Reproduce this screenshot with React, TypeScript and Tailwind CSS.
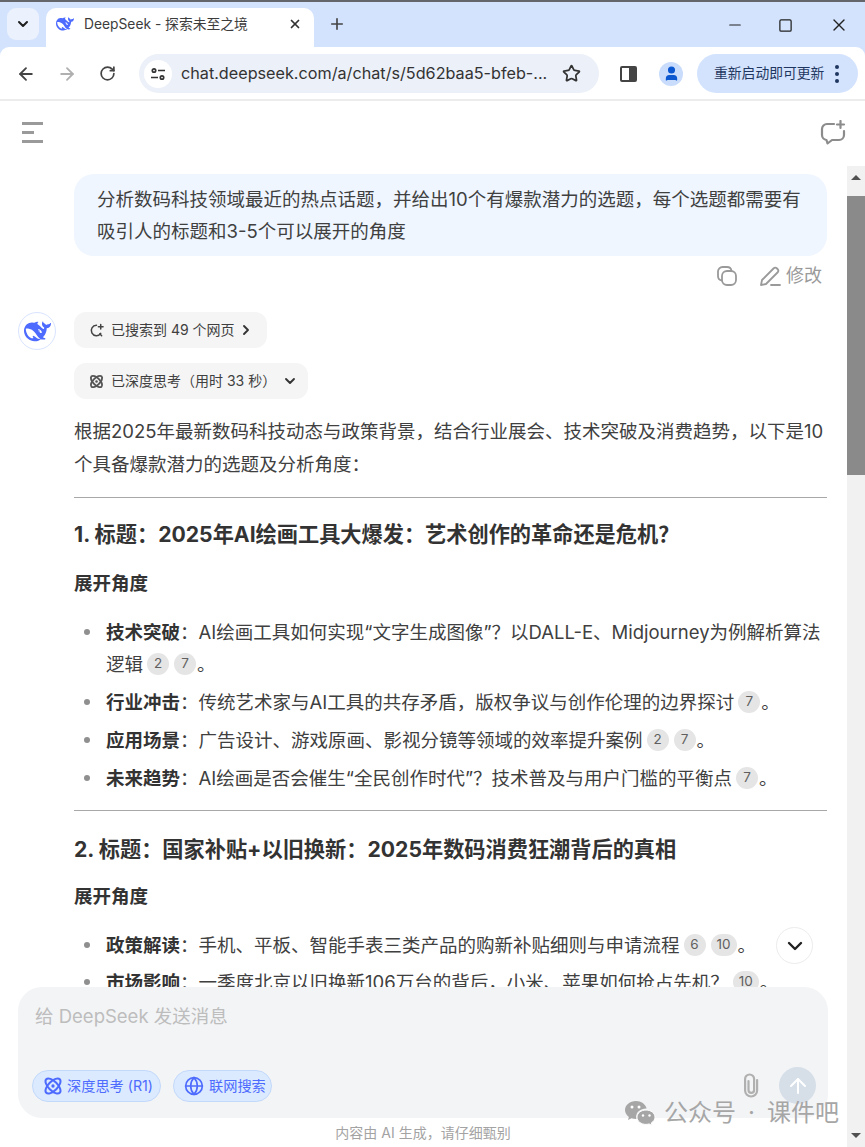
import React from "react";
import {
  ArrowLeft,
  ArrowRight,
  ArrowUp,
  ChevronDown,
  ChevronRight,
  Globe,
  Minus,
  Plus,
  RotateCw,
  Square,
  Star,
  User,
  X,
} from "lucide-react";

const whalePath =
  "M23.748 4.482c-.254-.124-.364.113-.512.234-.051.039-.094.09-.137.136-.372.397-.806.657-1.373.626-.829-.046-1.537.214-2.163.848-.133-.782-.575-1.248-1.247-1.548-.352-.156-.708-.311-.955-.65-.172-.241-.219-.51-.305-.774-.055-.16-.11-.323-.293-.35-.2-.031-.278.136-.356.276-.313.572-.434 1.202-.422 1.84.027 1.436.633 2.58 1.838 3.393.137.093.172.187.129.323-.082.28-.18.552-.266.833-.055.179-.137.217-.329.14a5.526 5.526 0 01-1.736-1.18c-.857-.828-1.631-1.742-2.597-2.458a11.365 11.365 0 00-.689-.471c-.985-.957.13-1.743.388-1.836.27-.098.093-.432-.779-.428-.872.004-1.67.295-2.687.684a3.055 3.055 0 01-.465.137 9.597 9.597 0 00-2.883-.102c-1.885.21-3.39 1.102-4.497 2.623C.082 8.606-.231 10.684.152 12.85c.403 2.284 1.569 4.175 3.36 5.653 1.858 1.533 3.997 2.284 6.438 2.14 1.482-.085 3.133-.284 4.994-1.86.47.234.962.327 1.78.397.63.059 1.236-.03 1.705-.128.735-.156.684-.837.419-.961-2.155-1.004-1.682-.595-2.113-.926 1.096-1.296 2.746-2.642 3.392-7.003.05-.347.007-.565 0-.845-.004-.17.035-.237.23-.256a4.173 4.173 0 001.545-.475c1.396-.763 1.96-2.015 2.093-3.517.02-.23-.004-.467-.247-.588zM11.581 18c-2.089-1.642-3.102-2.183-3.52-2.16-.392.024-.321.471-.235.763.09.288.207.486.371.739.114.167.192.416-.113.603-.673.416-1.842-.14-1.897-.167-1.361-.802-2.5-1.86-3.301-3.307-.774-1.393-1.224-2.887-1.298-4.482-.02-.386.093-.522.477-.592a4.696 4.696 0 011.529-.039c2.132.312 3.946 1.265 5.468 2.774.868.86 1.525 1.887 2.202 2.891.72 1.066 1.494 2.082 2.48 2.914.348.292.625.514.891.677-.802.09-2.14.11-3.054-.614zm1-6.44a.306.306 0 01.415-.287.302.302 0 01.2.288.306.306 0 01-.31.307.303.303 0 01-.304-.308zm3.11 1.596c-.2.081-.399.151-.59.16a1.245 1.245 0 01-.798-.254c-.274-.23-.47-.358-.552-.758a1.73 1.73 0 01.016-.588c.07-.327-.008-.537-.239-.727-.187-.156-.426-.199-.688-.199a.559.559 0 01-.254-.078c-.11-.054-.2-.19-.114-.358.028-.054.16-.186.192-.21.356-.202.767-.136 1.146.016.352.144.618.408 1.001.782.391.451.462.576.685.914.176.265.336.537.445.848.067.195-.019.354-.25.452z";

function Whale({ className }: { className?: string }) {
  return (
    <svg viewBox="0 0 24 24" className={className} fill="#4d6bfe">
      <path d={whalePath} />
    </svg>
  );
}

function Atom({ className, sw = 2.2 }: { className?: string; sw?: number }) {
  return (
    <svg
      viewBox="0 0 24 24"
      className={className}
      fill="none"
      stroke="currentColor"
      strokeWidth={sw}
    >
      <ellipse cx="12" cy="12" rx="5.5" ry="11.5" transform="rotate(45 12 12)" />
      <ellipse cx="12" cy="12" rx="5.5" ry="11.5" transform="rotate(-45 12 12)" />
      <circle cx="12" cy="12" r="2" fill="currentColor" stroke="none" />
    </svg>
  );
}

function Cite({ n }: { n: number }) {
  return (
    <span className="mr-[1px] ml-[4px] inline-flex h-[22px] min-w-[22px] items-center justify-center rounded-full bg-[#e5e5e5] px-[6px] align-[3px] text-[13.5px] leading-none font-normal text-[#5f5f5f]">
      {n}
    </span>
  );
}

function Item({
  label,
  children,
}: {
  label: string;
  children: React.ReactNode;
}) {
  return (
    <li className="relative pl-[32px]">
      <span className="absolute top-[13px] left-[10px] h-[6px] w-[6px] rounded-full bg-[#8f8f8f]" />
      <b className="font-semibold text-[#333]">{label}</b>：{children}
    </li>
  );
}

function App() {
  return (
    <div
      className="relative flex h-[1147px] w-[865px] flex-col overflow-hidden bg-white"
      style={{
        fontFamily:
          'Inter, "Noto Sans CJK SC", "Liberation Sans", sans-serif',
      }}
    >
      {/* browser chrome */}
      <div className="h-[2px] bg-[#63666b]" />
      <div className="flex h-[45px] items-start bg-[#d3e3fd] pt-[6px]">
        <div className="ml-[7px] flex h-[32px] w-[32px] items-center justify-center rounded-[9px] bg-[#ebf1fd]">
          <ChevronDown className="h-[16px] w-[16px] text-[#1f1f1f]" strokeWidth={3} />
        </div>
        <div className="ml-[7px] flex h-[39px] w-[268px] items-center rounded-t-[10px] bg-white pb-[7px]">
          <Whale className="ml-[10px] h-[18px] w-[18px]" />
          <span className="ml-[10px] text-[13.8px] whitespace-nowrap text-[#3c3c3c]">
            DeepSeek - 探索未至之境
          </span>
          <X className="ml-auto mr-[12px] h-[14px] w-[14px] text-[#333]" strokeWidth={3} />
        </div>
        <Plus className="ml-[14px] mt-[7px] h-[18px] w-[18px] text-[#444]" strokeWidth={2.2} />
        <div className="ml-auto flex items-center pt-[7px]">
          <Minus className="h-[18px] w-[18px] text-[#222]" strokeWidth={1.6} />
          <Square className="ml-[34px] h-[15px] w-[15px] text-[#222]" strokeWidth={2} />
          <X className="ml-[36px] mr-[16px] h-[20px] w-[20px] text-[#222]" strokeWidth={1.6} />
        </div>
      </div>
      <div className="bg-[#d3e3fd]">
        <div className="flex h-[54px] items-center rounded-t-[9px] border-b-2 border-[#ececec] bg-white pt-[1px]">
          <ArrowLeft className="ml-[16px] h-[20px] w-[20px] text-[#444]" strokeWidth={2.2} />
          <ArrowRight className="ml-[21px] h-[20px] w-[20px] text-[#b0b0b0]" strokeWidth={2.2} />
          <RotateCw className="ml-[22px] h-[17px] w-[17px] text-[#444]" strokeWidth={2.4} />
          <div className="ml-[23px] flex h-[39px] w-[460px] items-center rounded-full bg-[#ecf0f8]">
            <div className="ml-[5px] flex h-[28px] w-[28px] items-center justify-center rounded-full bg-white">
              <svg viewBox="0 0 16 16" className="h-[16px] w-[16px]" fill="none" stroke="#333" strokeWidth={1.7}>
                <circle cx="4" cy="4.5" r="1.7" />
                <path d="M8 4.5h7M1 11.5h7" />
                <circle cx="12" cy="11.5" r="1.7" />
              </svg>
            </div>
            <span className="ml-[9px] w-[366px] text-[16.2px] whitespace-nowrap text-[#333]">
              chat.deepseek.com/a/chat/s/5d62baa5-bfeb-...
            </span>
            <Star className="ml-auto mr-[18px] h-[19px] w-[19px] text-[#333]" strokeWidth={2.2} />
          </div>
          <div className="ml-[21px] flex h-[16px] w-[17px] overflow-hidden rounded-[2px] border-2 border-[#444]">
            <div className="w-1/2" />
            <div className="w-1/2 bg-[#444]" />
          </div>
          <div className="ml-[22px] flex h-[24px] w-[24px] items-center justify-center rounded-full bg-[#c9dcfb]">
            <User className="h-[17px] w-[17px] text-[#0b57d0]" fill="#0b57d0" />
          </div>
          <div className="ml-[14px] flex h-[39px] w-[161px] items-center rounded-full bg-[#d3e3fd] pl-[17px]">
            <span className="text-[13.8px] whitespace-nowrap text-[#1f3760]">重新启动即可更新</span>
            <div className="ml-[11px] flex flex-col gap-[3px]">
              <span className="h-[4px] w-[4px] rounded-full bg-[#1f3760]" />
              <span className="h-[4px] w-[4px] rounded-full bg-[#1f3760]" />
              <span className="h-[4px] w-[4px] rounded-full bg-[#1f3760]" />
            </div>
          </div>
        </div>
      </div>

      {/* page top bar */}
      <div className="flex h-[65px] shrink-0 items-center justify-between pr-[19px] pl-[22px] pb-[2px]">
        <div className="flex w-[21px] flex-col gap-[6.5px]">
          <span className="h-[2.5px] w-[21px] bg-[#9a9a9a]" />
          <span className="h-[2.5px] w-[12px] bg-[#9a9a9a]" />
          <span className="h-[2.5px] w-[21px] bg-[#9a9a9a]" />
        </div>
        <svg viewBox="0 0 26 26" className="h-[26px] w-[26px]" fill="none" stroke="#8c8c8c" strokeWidth={2.2} strokeLinecap="round" strokeLinejoin="round">
          <path d="M14 4H7a5 5 0 0 0-5 5v6a5 5 0 0 0 4.500 5l1 3.500 4.500-3.500h7a5 5 0 0 0 5-5v-4" />
          <path d="M20.500 1v7M17 4.500h7" />
        </svg>
      </div>

      <div className="flex min-h-0 flex-1">
        {/* chat */}
        <div className="relative min-w-0 flex-1 overflow-hidden">
          <div className="pt-[8px] pr-[20px] pl-[18px] text-[18.5px] leading-[32px] text-[#404040]">
            <div className="ml-[56px] rounded-[20px] bg-[#eff6ff] px-[23px] py-[9px]">
              分析数码科技领域最近的热点话题，并给出10个有爆款潜力的选题，每个选题都需要有吸引人的标题和3-5个可以展开的角度
            </div>
            <div className="flex h-[40px] items-center justify-end pr-[5px] text-[#9a9a9a]">
              <svg viewBox="0 0 20 20" className="h-[20px] w-[20px]" fill="none" stroke="#9a9a9a" strokeWidth={1.8}>
                <path d="M5 14.500A4.500 4.500 0 0 1 1 10V5.500A4.500 4.500 0 0 1 5.500 1H10a4.500 4.500 0 0 1 4.500 4" />
                <rect x="5" y="5" width="14" height="14" rx="5" />
              </svg>
              <svg viewBox="0 0 22 22" className="ml-[22px] h-[22px] w-[22px]" fill="none" stroke="#9a9a9a" strokeWidth={1.8} strokeLinecap="round" strokeLinejoin="round">
                <path d="M2 20l1-5L14.500 3.500a2.500 2.500 0 0 1 3.500 0l.5.5a2.500 2.500 0 0 1 0 3.500L7 19z" />
                <path d="M12 20h9" />
              </svg>
              <span className="ml-[5px] text-[18px]">修改</span>
            </div>

            <div className="mt-[16px] flex gap-[18px]">
              <div className="flex h-[38px] w-[38px] shrink-0 items-center justify-center rounded-full border border-[#d9e4ff]">
                <Whale className="h-[27px] w-[27px]" />
              </div>
              <div className="min-w-0 flex-1">
                <div className="flex h-[36px] w-[193px] items-center rounded-[12px] bg-[#f5f5f5] pl-[15px] text-[14px] leading-none text-[#404040]">
                  <svg viewBox="0 0 16 16" className="h-[15px] w-[15px]" fill="none" stroke="#444" strokeWidth={1.6} strokeLinecap="round">
                    <path d="M8 2.500a5.500 5.500 0 1 0 4.500 8.500M11.500 11.500l2 2" />
                    <path d="M12.500 1.500v5M10 4h5" />
                  </svg>
                  <span className="ml-[7px] whitespace-nowrap">已搜索到 49 个网页</span>
                  <ChevronRight className="ml-[3px] h-[16px] w-[16px] text-[#333]" strokeWidth={2.8} />
                </div>
                <div className="mt-[15px] flex h-[36px] w-[234px] items-center rounded-[12px] bg-[#f5f5f5] pl-[15px] text-[14px] leading-none text-[#404040]">
                  <Atom className="h-[15px] w-[15px] text-[#555]" sw={3} />
                  <span className="ml-[7px] whitespace-nowrap">已深度思考（用时 33 秒）</span>
                  <ChevronDown className="ml-[6px] h-[16px] w-[16px] text-[#333]" strokeWidth={2.8} />
                </div>

                <p className="mt-[16px] leading-[33px]">
                  根据2025年最新数码科技动态与政策背景，结合行业展会、技术突破及消费趋势，以下是10个具备爆款潜力的选题及分析角度：
                </p>
                <hr className="mt-[16px] border-[#a8a8a8]" />

                <h3 className="mt-[18px] text-[21.2px] leading-[36px] font-bold text-[#333]">
                  1. 标题：2025年AI绘画工具大爆发：艺术创作的革命还是危机？
                </h3>
                <h4 className="mt-[15px] font-semibold text-[#333]">展开角度</h4>
                <ul className="mt-[17px] flex flex-col gap-[6px]">
                  <Item label="技术突破">
                    AI绘画工具如何实现“文字生成图像”？以DALL-E、Midjourney为例解析算法逻辑
                    <Cite n={2} />
                    <Cite n={7} />。
                  </Item>
                  <Item label="行业冲击">
                    传统艺术家与AI工具的共存矛盾，版权争议与创作伦理的边界探讨
                    <Cite n={7} />。
                  </Item>
                  <Item label="应用场景">
                    广告设计、游戏原画、影视分镜等领域的效率提升案例
                    <Cite n={2} />
                    <Cite n={7} />。
                  </Item>
                  <Item label="未来趋势">
                    AI绘画是否会催生“全民创作时代”？技术普及与用户门槛的平衡点
                    <Cite n={7} />。
                  </Item>
                </ul>
                <hr className="mt-[16px] border-[#a8a8a8]" />

                <h3 className="mt-[20px] text-[21.2px] leading-[36px] font-bold text-[#333]">
                  2. 标题：国家补贴+以旧换新：2025年数码消费狂潮背后的真相
                </h3>
                <h4 className="mt-[13px] font-semibold text-[#333]">展开角度</h4>
                <ul className="mt-[17px] flex flex-col gap-[5px]">
                  <Item label="政策解读">
                    手机、平板、智能手表三类产品的购新补贴细则与申请流程
                    <Cite n={6} />
                    <Cite n={10} />。
                  </Item>
                  <Item label="市场影响">
                    一季度北京以旧换新106万台的背后，小米、苹果如何抢占先机？
                    <Cite n={10} />。
                  </Item>
                </ul>
              </div>
            </div>
          </div>

          {/* scroll to bottom button */}
          <div className="absolute top-[761px] left-[776px] flex h-[37px] w-[37px] items-center justify-center rounded-full border border-[#ececec] bg-white">
            <ChevronDown className="h-[24px] w-[24px] text-[#222]" strokeWidth={2.4} />
          </div>

          {/* composer */}
          <div className="absolute right-0 bottom-0 left-0 pr-[19px] pl-[18px]">
            <div className="flex h-[131px] flex-col rounded-[24px] bg-[#f3f4f6] px-[14px] pb-[14px]">
              <div className="mt-[13px] ml-[3px] text-[18.5px] leading-[32px] text-[#bdbdbd]">
                给 DeepSeek 发送消息
              </div>
              <div className="mt-auto flex items-center">
                <div className="flex h-[32px] w-[129px] items-center rounded-full border border-[#c3d9fb] bg-[#dbeafe] pl-[10px] text-[14.2px] text-[#4d6bfe]">
                  <Atom className="h-[20px] w-[20px]" sw={2.4} />
                  <span className="ml-[4px] whitespace-nowrap">深度思考 (R1)</span>
                </div>
                <div className="ml-[12px] flex h-[32px] w-[99px] items-center rounded-full border border-[#c3d9fb] bg-[#dbeafe] pl-[10px] text-[14.2px] text-[#4d6bfe]">
                  <Globe className="h-[20px] w-[20px]" strokeWidth={2} />
                  <span className="ml-[5px] whitespace-nowrap">联网搜索</span>
                </div>
                <svg viewBox="0 0 20 25" className="ml-auto h-[25px] w-[20px]" fill="none" stroke="#b0b0b0" strokeWidth={2.2} strokeLinecap="round">
                  <path d="M7.500 8v9a2.800 2.800 0 0 0 5.600 0V6a4.500 4.500 0 0 0-9 0v11.500a6 6 0 0 0 12 0V7" />
                </svg>
                <div className="ml-[18px] mr-[-2px] flex h-[37px] w-[37px] items-center justify-center rounded-full bg-[#d6dee8]">
                  <ArrowUp className="h-[24px] w-[24px] text-white" strokeWidth={2} />
                </div>
              </div>
            </div>
            <div className="flex h-[29px] items-center justify-center bg-white text-[14px] text-[#a3a3a3]">
              内容由 AI 生成，请仔细甄别
            </div>
          </div>
        </div>

        {/* scrollbar */}
        <div className="flex w-[18px] shrink-0 flex-col items-center bg-[#f1f1f1]">
          <div className="mt-[9px] h-0 w-0 border-x-[5px] border-b-[5px] border-x-transparent border-b-[#505050]" />
          <div className="mt-[16px] h-[279px] w-full bg-[#8a8a8a]" />
          <div className="mt-auto mb-[9px] h-0 w-0 border-x-[5px] border-t-[5px] border-x-transparent border-t-[#505050]" />
        </div>
      </div>

      {/* watermark */}
      <div className="absolute top-[1098px] left-[624px] flex items-center text-[#a6a6a6]">
        <svg viewBox="0 0 32 26" className="h-[26px] w-[32px]">
          <path fill="#a6a6a6" d="M12 1C5.900 1 1 5 1 10c0 2.800 1.500 5.200 3.900 6.900L4 20l3.500-1.800c1.400.5 2.900.8 4.500.8h.6a7.800 7.800 0 0 1-.4-2.400C12.200 12 16.500 8.400 22 8.400h.6C21.500 4.200 17.200 1 12 1z" />
          <path fill="#a6a6a6" stroke="#fff" strokeWidth={1} d="M22 10c-5 0-9 3.200-9 7.200s4 7.200 9 7.200c1.100 0 2.200-.2 3.200-.5l2.800 1.600-.7-2.600c2.200-1.300 3.700-3.400 3.700-5.700 0-4-4-7.200-9-7.200z" />
          <circle cx="8" cy="7" r="1.500" fill="#fff" />
          <circle cx="15" cy="7" r="1.500" fill="#fff" />
          <circle cx="19" cy="15.500" r="1.200" fill="#fff" />
          <circle cx="25.500" cy="15.500" r="1.200" fill="#fff" />
        </svg>
        <div className="ml-[8px] flex items-center gap-[12px] text-[24px] leading-[30px] whitespace-nowrap">
          <span>公众号</span>
          <span>·</span>
          <span>课件吧</span>
        </div>
      </div>
    </div>
  );
}

export default App;
